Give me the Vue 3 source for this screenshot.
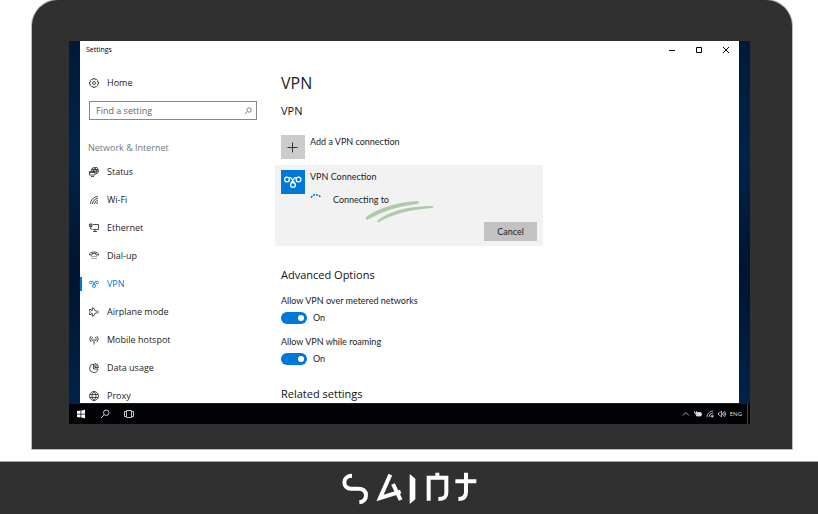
<template>
  <div class="page">
    <div class="laptop">
      <div class="screen">
        <section class="window">
          <header class="titlebar">
            <span>Settings</span>
            <div class="controls">
              <button v-for="c in controls" :key="c.name" type="button" :aria-label="c.name">
                <svg viewBox="0 0 8 8"><path :d="c.path" /></svg>
              </button>
            </div>
          </header>

          <div class="body">
            <nav class="sidebar">
              <a href="#" class="nav-item">
                <svg class="icon" viewBox="0 0 20 20"><path :d="gear" /></svg>
                <span>Home</span>
              </a>
              <div class="search">
                <input v-model="query" type="text" aria-label="Find a setting" placeholder="Find a setting" />
                <svg viewBox="0 0 20 20"><path :d="magnifier" /></svg>
              </div>
              <p class="group">Network &amp; Internet</p>
              <a
                v-for="item in items"
                :key="item.name"
                href="#"
                class="nav-item"
                :class="{ active: item.name === current }"
                @click.prevent="current = item.name"
              >
                <svg class="icon" viewBox="0 0 20 20"><path :d="item.path" /></svg>
                <span>{{ item.name }}</span>
              </a>
            </nav>

            <main class="content">
              <h1>VPN</h1>
              <h2>VPN</h2>

              <button type="button" class="add">
                <span class="tile">
                  <svg viewBox="0 0 24 24"><path d="M6.5 12.5H16.5M11.5 7.5V17.5" /></svg>
                </span>
                <span>Add a VPN connection</span>
              </button>

              <div class="card">
                <span class="tile blue">
                  <svg viewBox="0 0 24 24">
                    <circle cx="6" cy="9.5" r="2.4" />
                    <circle cx="17.5" cy="9.5" r="2.4" />
                    <circle cx="12" cy="15" r="2.4" />
                    <path d="M8 8Q9.5 7 10.5 8.5L13.5 13M15.5 8Q14 7 13 8.5L10 13" />
                  </svg>
                </span>
                <div class="details">
                  <span>VPN Connection</span>
                  <div class="status">
                    <svg class="spinner" viewBox="0 0 12 14"><path d="M1 4.5Q5 -1 10.5 4" /></svg>
                    <span>Connecting to</span>
                  </div>
                  <button type="button" class="cancel">Cancel</button>
                </div>
                <svg class="scribble" viewBox="0 0 68 22">
                  <path d="M0 16Q20 2 51 0Q55 1 51 3Q24 6 3 18Q-1 20 0 16Z" />
                  <path d="M12 19Q31 5 66 5Q69 6 66 7Q34 9 13 21Q10 22 12 19Z" />
                </svg>
              </div>

              <h2 class="section">Advanced Options</h2>
              <div v-for="opt in options" :key="opt.id" class="option">
                <label :for="opt.id">{{ opt.label }}</label>
                <div class="switch">
                  <input :id="opt.id" v-model="opt.on" type="checkbox" />
                  <span>{{ opt.on ? 'On' : 'Off' }}</span>
                </div>
              </div>

              <h2 class="section">Related settings</h2>
            </main>
          </div>
        </section>

        <footer class="taskbar">
          <button type="button" aria-label="Start">
            <svg class="solid" viewBox="0 0 20 20"><path d="M2 4L9 3V9.5H2ZM10.5 2.8L18 1.5V9.5H10.5ZM2 10.8H9V17.2L2 16ZM10.5 10.8H18V18.5L10.5 17.2Z" /></svg>
          </button>
          <button type="button" aria-label="Search">
            <svg viewBox="0 0 20 20"><path :d="magnifier" /></svg>
          </button>
          <button type="button" aria-label="Task view">
            <svg viewBox="0 0 20 20"><path d="M5 3H15V17H5ZM4 5H1V15H4M16 5H19V15H16" /></svg>
          </button>
          <div class="tray">
            <svg viewBox="0 0 16 16"><path d="M2 11L8 5L14 11" /></svg>
            <svg viewBox="0 0 16 16"><path d="M1 2V6H5V2M3 6V9" /><path class="fill" d="M5 5H14V7H15V10H14V12H5Z" /></svg>
            <svg viewBox="0 0 16 16"><path d="M2 14A12 12 0 0 1 14 2M6 14A8 8 0 0 1 14 6M10 14A4 4 0 0 1 14 10" /><path class="fill" d="M11 14L14 11V14Z" /></svg>
            <svg viewBox="0 0 16 16"><path d="M1 6H3L7 2V14L3 10H1ZM9 6Q10 8 9 10M11 4Q14 8 11 12M13 2Q18 8 13 14" /></svg>
            <span>ENG</span>
          </div>
        </footer>
      </div>
    </div>

    <div class="base">
      <svg class="logo" viewBox="68 50 405 99" role="img" aria-label="Saint">
        <path d="M98 61C84 61 75 70 75 81C75 93 84 100 95 100H117C131 100 140 107 140 120C140 132 132 140 120 141" />
        <path d="M213 58L182 128L244 109M221 86L244 134" />
        <path class="fill" d="M271 56L288 70V132L271 146Z" />
        <path d="M328 136V67H381V112C381 126 374 131 357 131M354 52V67" />
        <path d="M408 78H471M440 52V110C440 124 432 131 417 131" />
      </svg>
    </div>
  </div>
</template>

<script setup>
import { ref } from 'vue';

const query = ref('');
const current = ref('VPN');

const controls = [
  { name: 'Minimize', path: 'M1 4.5H7' },
  { name: 'Maximize', path: 'M1.5 1.5H6.5V6.5H1.5Z' },
  { name: 'Close', path: 'M1 1L7 7M7 1L1 7' }
];

const magnifier = 'M8 12L2 18M18 7.5A5.5 5.5 0 1 1 7 7.5A5.5 5.5 0 1 1 18 7.5';
const gear = 'M8 1H12L12.5 3.5L15 2.5L17.5 5L16.5 7.5L19 8V12L16.5 12.5L17.5 15L15 17.5L12.5 16.5L12 19H8L7.5 16.5L5 17.5L2.5 15L3.5 12.5L1 12V8L3.5 7.5L2.5 5L5 2.5L7.5 3.5ZM13 10A3 3 0 1 1 7 10A3 3 0 1 1 13 10';

const items = [
  { name: 'Status', path: 'M5 8A7 7 0 1 1 14 14M5 5H18M7 8H19M12 1Q8 4 9 8M12 1Q17 7 14 14M1 9H12V16H1ZM4 19H10M1 11H12' },
  { name: 'Wi-Fi', path: 'M3 18A15 15 0 0 1 18 3M7 18A11 11 0 0 1 18 7M11 18A7 7 0 0 1 18 11M15 18A3 3 0 0 1 18 15' },
  { name: 'Ethernet', path: 'M1 2H6V7H1ZM1 4H6M3.5 7V12H6M8 3H19V13H7M12 13V17M8 17H16' },
  { name: 'Dial-up', path: 'M1 8Q1 2 10 2Q19 2 19 8H14V5Q10 4 6 5V8ZM6 10V12M10 10V12M14 10V12M6 14V16M10 14V16M14 14V16' },
  { name: 'VPN', path: 'M6 7A2.5 2.5 0 1 1 1 7A2.5 2.5 0 1 1 6 7M19 7A2.5 2.5 0 1 1 14 7A2.5 2.5 0 1 1 19 7M13 14A3 3 0 1 1 7 14A3 3 0 1 1 13 14M5 5Q8 3 9 7L12 12M15 5Q12 3 11 7L8 12' },
  { name: 'Airplane mode', path: 'M7 7L6 2H9L13 8H17Q21 10 17 12H13L9 18H6L7 13H5L4 15H1V12L3 10L1 8V5H4L5 7Z' },
  { name: 'Mobile hotspot', path: 'M4 2Q-1 8 4 14M7 4Q4 8 7 12M13 4Q16 8 13 12M16 2Q21 8 16 14M10 8V19' },
  { name: 'Data usage', path: 'M9 2A8.5 8.5 0 1 0 18 12H9ZM12 1V9H19A8 8 0 0 0 12 1M12 9L17 4' },
  { name: 'Proxy', path: 'M19 10A9 9 0 1 1 1 10A9 9 0 1 1 19 10M10 1Q2 10 10 19M10 1Q18 10 10 19M2 7H18M2 13H18' }
];

const options = ref([
  { id: 'metered', label: 'Allow VPN over metered networks', on: true },
  { id: 'roaming', label: 'Allow VPN while roaming', on: true }
]);
</script>

<style>
body {
  margin: 0;
  background: #fff;
}
</style>

<style scoped>
* {
  box-sizing: border-box;
}

.page {
  font-family: 'Open Sans', 'Noto Sans', sans-serif;
  font-size: 9px;
  line-height: 14px;
  color: #222;
  overflow: hidden;
}

h1,
h2,
p {
  margin: 0;
  font-weight: 400;
}

button {
  font: inherit;
  color: inherit;
  padding: 0;
  border: none;
  background: none;
}

svg {
  display: block;
  flex-shrink: 0;
  fill: none;
  stroke: currentColor;
}

.laptop {
  margin: 0 26px 0 32px;
  padding: 41px 42px 25px 37px;
  background: #303030;
  border-radius: 26px 26px 0 0;
  box-shadow: 0 0 0 1px #bbb;
}

.screen {
  display: flex;
  flex-direction: column;
  aspect-ratio: 681 / 383;
  background: linear-gradient(#001a38, #00234a 30%, #001430 60%, #00254f);
}

.window {
  flex: 1;
  min-height: 0;
  margin: 0 11px 1px;
  overflow: hidden;
  background: #fff;
}

.titlebar {
  display: flex;
  justify-content: space-between;
  align-items: center;
  height: 18px;
  padding-left: 6px;
  font-size: 7px;
  color: #000;
}

.controls {
  display: flex;
}

.controls button {
  display: flex;
  align-items: center;
  justify-content: center;
  width: 27px;
  height: 18px;
}

.controls svg {
  width: 8px;
  height: 8px;
}

.body {
  display: flex;
}

.sidebar {
  width: 195px;
  padding-top: 10px;
}

.nav-item {
  position: relative;
  display: flex;
  align-items: center;
  gap: 8px;
  height: 28px;
  padding-left: 9px;
  color: #222;
  text-decoration: none;
}

.nav-item.active {
  color: #0078d7;
}

.nav-item.active::before {
  content: '';
  position: absolute;
  left: 0;
  top: 7px;
  width: 2px;
  height: 14px;
  background: #0078d7;
}

.icon {
  width: 10px;
  height: 10px;
  stroke-width: 1.6;
}

.search {
  display: flex;
  align-items: center;
  height: 19px;
  margin: 4px 18px 0 9px;
  padding: 0 4px 0 6px;
  border: 1px solid #888;
  color: #666;
}

.search input {
  flex: 1;
  min-width: 0;
  padding: 0;
  border: none;
  outline: none;
  background: none;
  font: inherit;
}

.search input::placeholder {
  color: #666;
}

.search svg {
  width: 8px;
  height: 8px;
  stroke-width: 2;
}

.group {
  margin-top: 18px;
  padding-left: 8px;
  line-height: 20px;
  color: #777;
}

.content {
  flex: 1;
  padding: 12px 0 0 6px;
  font-family: Lato, 'Open Sans', sans-serif;
}

h1,
h2 {
  font-family: 'Open Sans', 'Noto Sans', sans-serif;
}

h1 {
  font-size: 16px;
  line-height: 24px;
}

h2 {
  margin-top: 8px;
  font-size: 11px;
  line-height: 16px;
  color: #111;
}

h2.section {
  margin-top: 21px;
}

.add {
  display: flex;
  gap: 5px;
  margin-top: 16px;
  text-align: left;
}

.tile {
  flex-shrink: 0;
  width: 24px;
  height: 24px;
  background: #ccc;
  color: #333;
}

.tile.blue {
  background: #0078d7;
  color: #fff;
  stroke-width: 1.3;
}

.card {
  position: relative;
  display: flex;
  gap: 5px;
  max-width: 268px;
  margin: 6px 0 0 -6px;
  padding: 5px 6px;
  background: #f2f2f2;
}

.details {
  flex: 1;
  display: flex;
  flex-direction: column;
}

.status {
  display: flex;
  gap: 11px;
  margin-top: 9px;
}

.spinner {
  width: 12px;
  height: 14px;
  color: #0078d7;
  stroke-width: 1.5;
  stroke-dasharray: 2 1;
}

.cancel {
  align-self: flex-end;
  width: 53px;
  height: 19px;
  margin-top: 15px;
  background: #c2c2c2;
}

.scribble {
  position: absolute;
  left: 91px;
  top: 36px;
  width: 68px;
  height: 22px;
  fill: #afcaaa;
  stroke: none;
}

.option {
  margin-top: 11px;
}

.option label {
  display: block;
}

.switch {
  display: flex;
  align-items: center;
  gap: 6px;
  height: 12px;
  margin-top: 4px;
}

.switch input {
  appearance: none;
  display: flex;
  align-items: center;
  width: 26px;
  height: 12px;
  margin: 0;
  padding: 0 3px;
  border-radius: 6px;
  background: #999;
}

.switch input::before {
  content: '';
  width: 6px;
  height: 6px;
  border-radius: 50%;
  background: #fff;
}

.switch input:checked {
  justify-content: flex-end;
  background: #0078d7;
}

.taskbar {
  display: flex;
  align-items: center;
  gap: 14px;
  height: 20px;
  padding: 0 2px 0 7px;
  background: #010307;
  color: #ddd;
}

.taskbar svg {
  width: 10px;
  height: 10px;
  stroke-width: 1.8;
}

.taskbar .solid {
  fill: #fff;
  stroke: none;
}

.fill {
  fill: currentColor;
}

.tray {
  display: flex;
  align-items: center;
  gap: 4px;
  height: 20px;
  margin-left: auto;
  padding-right: 5px;
  border-right: 1px solid #444;
  font-size: 6px;
}

.tray svg {
  width: 8px;
  height: 8px;
  stroke-width: 1.5;
}

.base {
  display: flex;
  justify-content: center;
  margin-top: 12px;
  padding: 10px 0;
  background: #303030;
  border-top: 1px solid #a0a5a3;
}

.logo {
  width: 135px;
  height: 33px;
  color: #fff;
  stroke-width: 12;
}

.logo .fill {
  stroke: none;
}
</style>
